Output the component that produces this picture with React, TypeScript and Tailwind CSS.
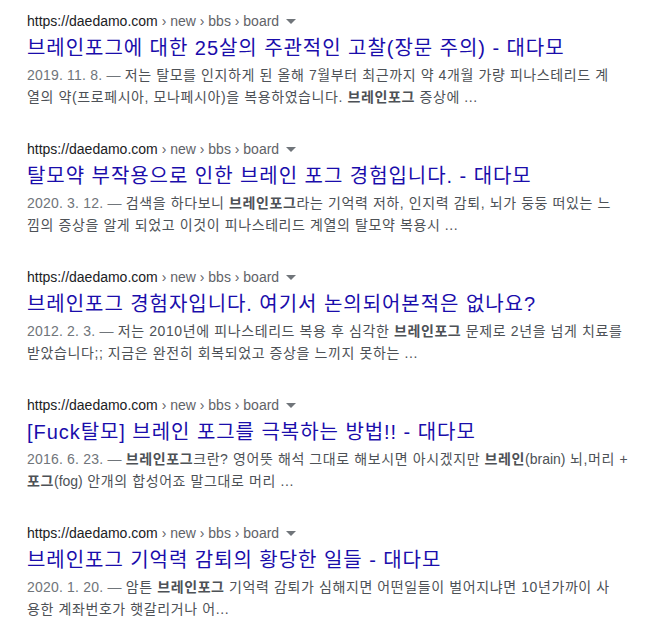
import React from 'react';

type Seg = { t: string; b?: boolean; latin?: boolean };

interface Result {
  title: string;
  date: string;
  lines: Seg[][];
}

const results: Result[] = [
  {
    title: '브레인포그에 대한 25살의 주관적인 고찰(장문 주의) - 대다모',
    date: '2019. 11. 8.',
    lines: [
      [{ t: '저는 탈모를 인지하게 된 올해 7월부터 최근까지 약 4개월 가량 피나스테리드 계' }],
      [{ t: '열의 약(프로페시아, 모나페시아)을 복용하였습니다. ' }, { t: '브레인포그', b: true }, { t: ' 증상에 ...' }],
    ],
  },
  {
    title: '탈모약 부작용으로 인한 브레인 포그 경험입니다. - 대다모',
    date: '2020. 3. 12.',
    lines: [
      [{ t: '검색을 하다보니 ' }, { t: '브레인포그', b: true }, { t: '라는 기억력 저하, 인지력 감퇴, 뇌가 둥둥 떠있는 느' }],
      [{ t: '낌의 증상을 알게 되었고 이것이 피나스테리드 계열의 탈모약 복용시 ...' }],
    ],
  },
  {
    title: '브레인포그 경험자입니다. 여기서 논의되어본적은 없나요?',
    date: '2012. 2. 3.',
    lines: [
      [{ t: '저는 2010년에 피나스테리드 복용 후 심각한 ' }, { t: '브레인포그', b: true }, { t: ' 문제로 2년을 넘게 치료를' }],
      [{ t: '받았습니다;; 지금은 완전히 회복되었고 증상을 느끼지 못하는 ...' }],
    ],
  },
  {
    title: '[Fuck탈모] 브레인 포그를 극복하는 방법!! - 대다모',
    date: '2016. 6. 23.',
    lines: [
      [
        { t: '브레인포그', b: true },
        { t: '크란? 영어뜻 해석 그대로 해보시면 아시겠지만 ' },
        { t: '브레인', b: true },
        { t: '(brain)', latin: true },
        { t: ' 뇌,머리 +' },
      ],
      [{ t: '포그', b: true }, { t: '(fog)', latin: true }, { t: ' 안개의 합성어죠 말그대로 머리 ...' }],
    ],
  },
  {
    title: '브레인포그 기억력 감퇴의 황당한 일들 - 대다모',
    date: '2020. 1. 20.',
    lines: [
      [{ t: '암튼 ' }, { t: '브레인포그', b: true }, { t: ' 기억력 감퇴가 심해지면 어떤일들이 벌어지냐면 10년가까이 사' }],
      [{ t: '용한 계좌번호가 햇갈리거나 어...' }],
    ],
  },
];

const font = "font-['Liberation_Sans','Noto_Sans_CJK_KR',sans-serif]";

const SearchResult: React.FC<{ r: Result }> = ({ r }) => (
  <div className="mb-[32px]">
    <div className="h-[18px] text-[14px] leading-[18px] whitespace-nowrap">
      <span className="text-[#202124]">https://daedamo.com</span>
      <span className="text-[#5f6368]">{' › new › bbs › board'}</span>
      <span className="inline-block align-middle ml-[7px] mb-[2px] w-0 h-0 border-l-[5px] border-r-[5px] border-t-[5px] border-l-transparent border-r-transparent border-t-[#70757a]" />
    </div>
    <h3 className="pt-[5px] mb-[3px] text-[20px] leading-[26px] text-[#1a0dab] whitespace-nowrap tracking-[0.95px]">
      {r.title}
    </h3>
    <div className="text-[14px] leading-[22px] text-[#4d5156] tracking-[0.6px]">
      {r.lines.map((line, i) => (
        <div key={i} className="whitespace-nowrap">
          {i === 0 && <span className="text-[#70757a] tracking-[0.2px]">{r.date} — </span>}
          {line.map((s, j) =>
            s.b ? (
              <b key={j} className="font-bold text-[#4d5156]">{s.t}</b>
            ) : (
              <span key={j} className={s.latin ? 'tracking-normal' : undefined}>{s.t}</span>
            )
          )}
        </div>
      ))}
    </div>
  </div>
);

export default function App() {
  return (
    <div className={`${font} bg-white w-[668px] h-[628px] overflow-hidden pl-[27px] pt-[12px]`}>
      {results.map((r, i) => (
        <SearchResult key={i} r={r} />
      ))}
    </div>
  );
}
